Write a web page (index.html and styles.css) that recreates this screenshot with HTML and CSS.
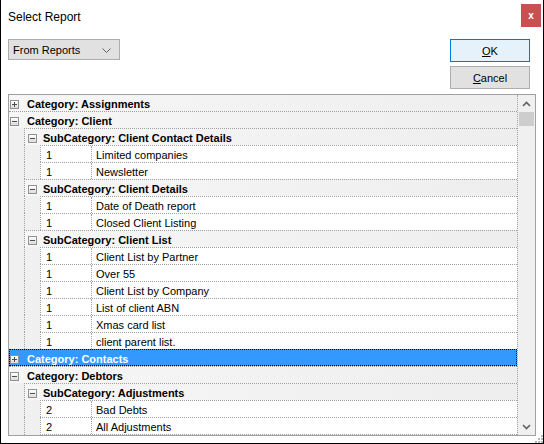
FILE: index.html
```html
<!DOCTYPE html>
<html lang="en">
<head>
  <meta charset="UTF-8">
  <title>Select Report</title>
  <link rel="stylesheet" href="styles.css">
</head>
<body>
  <div class="dialog">
    <div class="titlebar">
      <span class="title">Select Report</span>
      <span class="close">x</span>
    </div>

    <div class="toolbar">
      <div class="combo">
        <span>From Reports</span>
        <svg width="9" height="5" viewBox="0 0 9 5"><path d="M0.5 0.5 L4.5 4.5 L8.5 0.5" fill="none" stroke="#606060"/></svg>
      </div>
      <div class="buttons">
        <button class="btn btn-default"><u>O</u>K</button>
        <button class="btn"><u>C</u>ancel</button>
      </div>
    </div>

    <div class="tree">
      <div class="rows">
        <div class="row cat"><span class="exp plus"></span>Category: Assignments</div>
        <div class="row cat"><span class="exp"></span>Category: Client</div>
        <div class="row sub"><span class="exp"></span>SubCategory: Client Contact Details</div>
        <div class="row item"><div class="cells"><span class="num">1</span><span class="name">Limited companies</span></div></div>
        <div class="row item"><div class="cells"><span class="num">1</span><span class="name">Newsletter</span></div></div>
        <div class="row sub"><span class="exp"></span>SubCategory: Client Details</div>
        <div class="row item"><div class="cells"><span class="num">1</span><span class="name">Date of Death report</span></div></div>
        <div class="row item"><div class="cells"><span class="num">1</span><span class="name">Closed Client Listing</span></div></div>
        <div class="row sub"><span class="exp"></span>SubCategory: Client List</div>
        <div class="row item"><div class="cells"><span class="num">1</span><span class="name">Client List by Partner</span></div></div>
        <div class="row item"><div class="cells"><span class="num">1</span><span class="name">Over 55</span></div></div>
        <div class="row item"><div class="cells"><span class="num">1</span><span class="name">Client List by Company</span></div></div>
        <div class="row item"><div class="cells"><span class="num">1</span><span class="name">List of client ABN</span></div></div>
        <div class="row item"><div class="cells"><span class="num">1</span><span class="name">Xmas card list</span></div></div>
        <div class="row item"><div class="cells"><span class="num">1</span><span class="name">client parent list.</span></div></div>
        <div class="row cat selected"><span class="exp plus"></span>Category: Contacts</div>
        <div class="row cat"><span class="exp"></span>Category: Debtors</div>
        <div class="row sub"><span class="exp"></span>SubCategory: Adjustments</div>
        <div class="row item"><div class="cells"><span class="num">2</span><span class="name">Bad Debts</span></div></div>
        <div class="row item"><div class="cells"><span class="num">2</span><span class="name">All Adjustments</span></div></div>
      </div>

      <div class="scrollbar">
        <div class="arrow">
          <svg width="9" height="6" viewBox="0 0 9 6"><path d="M1 5 L4.5 1.5 L8 5" fill="none" stroke="#606060" stroke-width="1.6"/></svg>
        </div>
        <div class="thumb"></div>
        <div class="track"></div>
        <div class="arrow">
          <svg width="9" height="6" viewBox="0 0 9 6"><path d="M1 1 L4.5 4.5 L8 1" fill="none" stroke="#606060" stroke-width="1.6"/></svg>
        </div>
      </div>
    </div>

    <!-- size grip -->
    <svg class="grip" width="8" height="8" viewBox="0 0 8 8" fill="#b8b8b8">
      <rect x="6" y="0" width="2" height="2"/>
      <rect x="3" y="3" width="2" height="2"/><rect x="6" y="3" width="2" height="2"/>
      <rect x="0" y="6" width="2" height="2"/><rect x="3" y="6" width="2" height="2"/><rect x="6" y="6" width="2" height="2"/>
    </svg>
  </div>
</body>
</html>
```

FILE: styles.css
```css
* {
  box-sizing: border-box;
}

body {
  margin: 0;
  font-family: "Liberation Sans", Arial, sans-serif;
  font-size: 11px;
  color: #000;
  background: #fff;
}

.dialog {
  position: relative;
  width: 544px;
  height: 444px;
  background: #fff;
  border: 1px solid #000;
  border-top: none;
}

/* title bar */
.titlebar {
  display: flex;
  justify-content: space-between;
  align-items: flex-start;
  height: 31px;
  padding: 0 2px 0 7px;
}

.title {
  margin-top: 9px;
  font-size: 12px;
  line-height: 16px;
}

.close {
  width: 20px;
  height: 23px;
  margin-top: 4px;
  background: #c75050;
  color: #fff;
  font-weight: bold;
  font-size: 10px;
  line-height: 24px;
  text-align: center;
}

/* combo + buttons */
.toolbar {
  display: flex;
  justify-content: space-between;
  align-items: flex-start;
  margin-top: 8px;
  padding: 0 13px 0 7px;
}

.combo {
  display: flex;
  justify-content: space-between;
  align-items: center;
  width: 112px;
  height: 21px;
  padding: 1px 8px 0 4px;
  background: #e1e1e1;
  border: 1px solid #adadad;
}

.buttons {
  display: flex;
  flex-direction: column;
  gap: 4px;
}

.btn {
  width: 80px;
  height: 23px;
  padding: 1px 0 0;
  font-family: inherit;
  font-size: 11px;
  color: #000;
  background: #e1e1e1;
  border: 1px solid #adadad;
}

.btn-default {
  background: #e5f1fb;
  border-color: #0078d7;
}

/* tree list */
.tree {
  display: flex;
  height: 342px;
  margin: 5px 7px 0 7px;
  border: 1px solid #a0a0a0;
  background: #f0f0f0;
}

.rows {
  width: 509px;
  border-right: 1px dotted #a0a0a0;
}

.row {
  display: flex;
  align-items: center;
  height: 17px;
  padding-top: 2px;
  border-top: 1px dotted #a0a0a0;
  white-space: nowrap;
}

.row:first-child {
  height: 16px;
  border-top: none;
}

.row:last-child {
  height: 18px;
  border-bottom: 1px dotted #a0a0a0;
}

.cat,
.sub {
  font-weight: bold;
  background: linear-gradient(to right, #f6f6f6, #eeeeee);
}

.cat .exp {
  margin: 0 8px 0 1px;
}

.sub {
  margin-left: 15px;
  border-left: 1px dotted #a0a0a0;
}

.sub .exp {
  margin: 0 6px 0 3px;
}

.selected {
  color: #fff;
  background: #3399ff;
  outline: 1px dotted #000;
  outline-offset: -1px;
}

.exp {
  position: relative;
  flex: none;
  width: 9px;
  height: 9px;
  margin-top: -2px;
  border: 1px solid #919191;
  background: linear-gradient(#ffffff, #dcdcdc);
}

.exp::before {
  content: "";
  position: absolute;
  left: 1px;
  top: 3px;
  width: 5px;
  height: 1px;
  background: #4d4d4d;
}

.exp.plus::after {
  content: "";
  position: absolute;
  left: 3px;
  top: 1px;
  width: 1px;
  height: 5px;
  background: #4d4d4d;
}

.item {
  align-items: stretch;
  margin-left: 15px;
  padding-top: 0;
  padding-left: 15px;
  border-top: none;
  border-left: 1px dotted #a0a0a0;
}

.item:last-child {
  border-bottom: none;
}

.cells {
  display: flex;
  align-items: center;
  flex: 1;
  padding-top: 2px;
  background: #fff;
  border-top: 1px dotted #a0a0a0;
  border-left: 1px dotted #a0a0a0;
}

.item:last-child .cells {
  border-bottom: 1px dotted #a0a0a0;
}

.num {
  align-self: stretch;
  width: 51px;
  margin-top: -2px;
  padding: 2px 0 0 5px;
  line-height: 14px;
  border-right: 1px dotted #a0a0a0;
}

.name {
  padding-left: 4px;
}

/* scrollbar */
.scrollbar {
  display: flex;
  flex-direction: column;
  width: 17px;
  background: #f0f0f0;
}

.arrow {
  display: flex;
  align-items: center;
  justify-content: center;
  height: 17px;
}

.thumb {
  height: 14px;
  margin: 0 1px;
  background: #cdcdcd;
}

.track {
  flex: 1;
}

.grip {
  position: absolute;
  right: 0;
  bottom: 0;
}
```
